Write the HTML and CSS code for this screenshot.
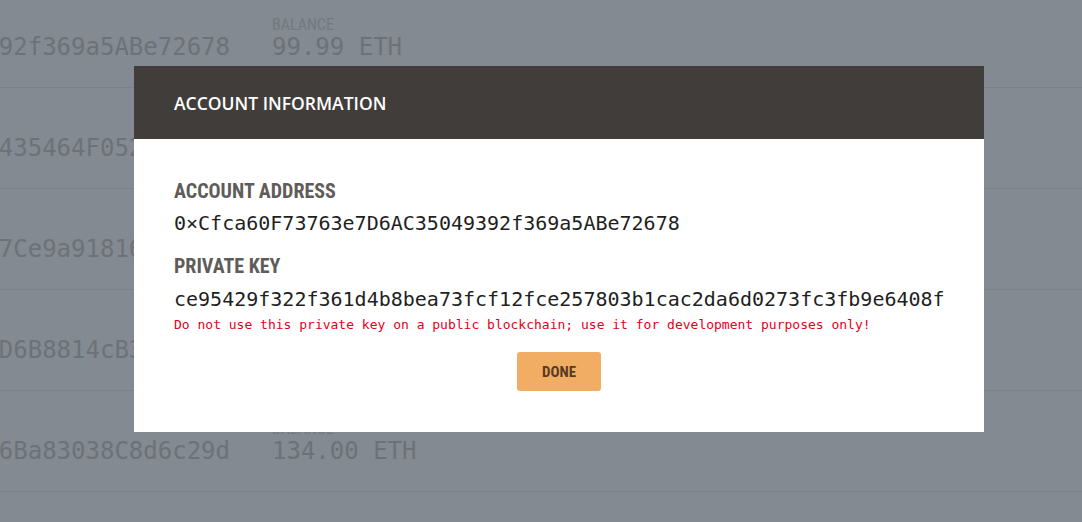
FILE: index.html
```html
<!DOCTYPE html>
<html>
<head>
<meta charset="utf-8">
<link rel="stylesheet" href="styles.css">
</head>
<body>
<div class="accounts">
  <div class="row first">
    <div class="address"><span>0xCfca60F73763e7D6AC35049392f369a5ABe72678</span></div>
    <div class="balance"><div class="blabel">BALANCE</div><div class="bvalue">99.99 ETH</div></div>
  </div>
  <div class="row">
    <div class="address"><span>0x2a5B1e9F0c3D7784aE61b0C9435464F0528e1a4C</span></div>
    <div class="balance"><div class="blabel">BALANCE</div><div class="bvalue">100.00 ETH</div></div>
  </div>
  <div class="row">
    <div class="address"><span>0x9F3c0A72b5E14d86C2a0f7B37Ce9a91816d2B04e</span></div>
    <div class="balance"><div class="blabel">BALANCE</div><div class="bvalue">100.00 ETH</div></div>
  </div>
  <div class="row">
    <div class="address"><span>0x5E7a2C90d4B8f1136eA0c5D9D6B8814cB3a7f210</span></div>
    <div class="balance"><div class="blabel">BALANCE</div><div class="bvalue">100.00 ETH</div></div>
  </div>
  <div class="row">
    <div class="address"><span>0x1d4E8b7A03fC25e9b6D0a1F46Ba83038C8d6c29d</span></div>
    <div class="balance"><div class="blabel">BALANCE</div><div class="bvalue">134.00 ETH</div></div>
  </div>
</div>

<div class="overlay">
  <div class="modal">
    <div class="modal-header">ACCOUNT INFORMATION</div>
    <div class="modal-body">
      <div class="label">ACCOUNT ADDRESS</div>
      <div class="mono addr">0×Cfca60F73763e7D6AC35049392f369a5ABe72678</div>
      <div class="label second">PRIVATE KEY</div>
      <div class="mono key">ce95429f322f361d4b8bea73fcf12fce257803b1cac2da6d0273fc3fb9e6408f</div>
      <div class="warning">Do not use this private key on a public blockchain; use it for development purposes only!</div>
      <div class="actions"><button class="done">DONE</button></div>
    </div>
  </div>
</div>
</body>
</html>
```

FILE: styles.css
```css
html, body {
  margin: 0;
  padding: 0;
  height: 100%;
  overflow: hidden;
}
body {
  background: #848a91;
  font-family: "Open Sans", "Noto Sans", sans-serif;
}
.accounts {
  display: flex;
  flex-direction: column;
  margin-top: -13px;
}
.row {
  display: flex;
  align-items: flex-start;
  height: 101px;
  border-bottom: 1px solid #7b8187;
  padding-top: 29px;
  box-sizing: border-box;
  gap: 42px;
}
.address {
  width: 230px;
  display: flex;
  justify-content: flex-end;
  overflow: hidden;
  white-space: nowrap;
  padding-top: 17px;
}
.address span,
.bvalue {
  font-family: "DejaVu Sans Mono", "Liberation Mono", monospace;
  font-size: 24px;
  line-height: 28px;
  color: #6c7278;
}
.balance {
  display: flex;
  flex-direction: column;
}
.blabel {
  font-family: "Roboto", sans-serif;
  font-stretch: 85%;
  font-size: 16px;
  line-height: 17px;
  color: #737980;
}
.overlay {
  position: absolute;
  inset: 0;
  display: flex;
  align-items: flex-start;
  padding: 66px 0 0 134px;
}
.modal {
  width: 850px;
  background: #ffffff;
}
.modal-header {
  height: 73px;
  background: #413d3a;
  color: #ffffff;
  display: flex;
  align-items: center;
  padding: 0 40px;
  font-size: 17.5px;
  font-weight: 600;
}
.modal-body {
  padding: 41px 40px 41px;
  display: flex;
  flex-direction: column;
}
.label {
  font-family: "Roboto", sans-serif;
  font-stretch: 85%;
  font-weight: 700;
  font-size: 20px;
  line-height: 22px;
  color: #5f5c59;
}
.label.second { margin-top: 20px; }
.mono {
  font-family: "DejaVu Sans Mono", "Liberation Mono", monospace;
  font-size: 20px;
  line-height: 24px;
  color: #1f1f1f;
}
.mono.addr { margin-top: 9px; }
.mono.key { margin-top: 10px; }
.warning {
  font-family: "DejaVu Sans Mono", "Liberation Mono", monospace;
  font-size: 13px;
  line-height: 16px;
  color: #e2001a;
  margin-top: 6px;
}
.actions {
  display: flex;
  justify-content: center;
  margin-top: 19px;
}
.done {
  width: 84px;
  height: 39px;
  border: none;
  border-radius: 3px;
  background: #f0ad63;
  color: #5a3a22;
  font-family: "Roboto", sans-serif;
  font-stretch: 85%;
  font-weight: 700;
  font-size: 15px;
  padding: 0;
}
```
